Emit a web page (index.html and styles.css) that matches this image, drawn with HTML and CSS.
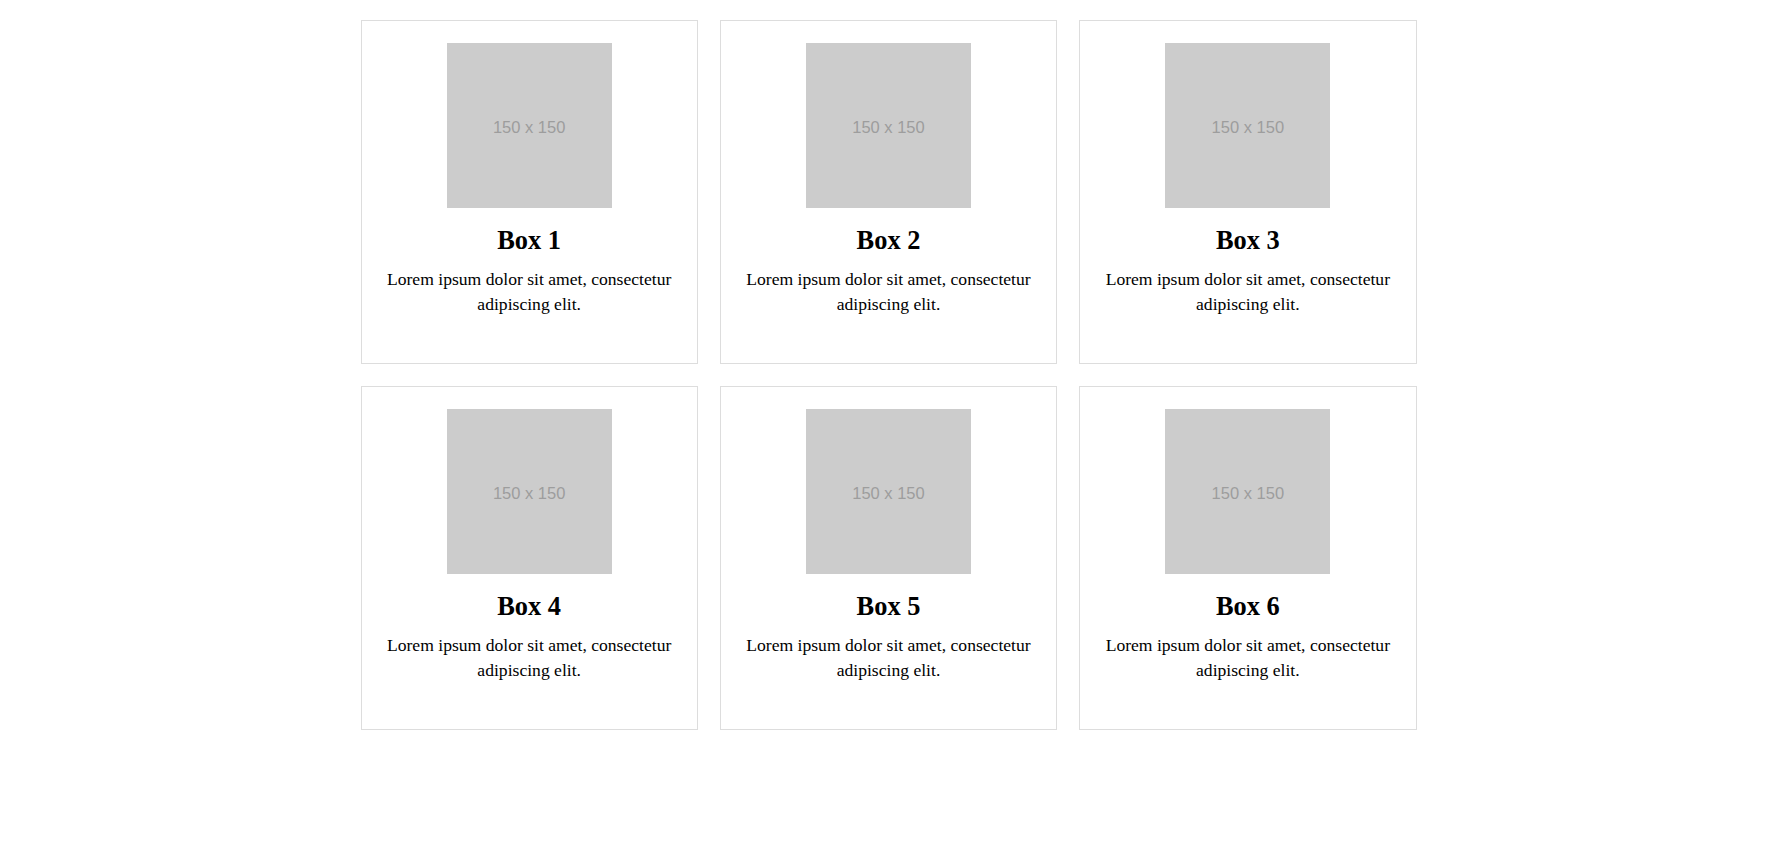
FILE: index.html
```html
<!DOCTYPE html>
<html>
<head>
<meta charset="utf-8">
<link rel="stylesheet" href="styles.css">
</head>
<body>
<div class="container">
  <div class="box"><div class="ph">150 x 150</div><h2>Box 1</h2><p>Lorem ipsum dolor sit amet, consectetur adipiscing elit.</p></div>
  <div class="box"><div class="ph">150 x 150</div><h2>Box 2</h2><p>Lorem ipsum dolor sit amet, consectetur adipiscing elit.</p></div>
  <div class="box"><div class="ph">150 x 150</div><h2>Box 3</h2><p>Lorem ipsum dolor sit amet, consectetur adipiscing elit.</p></div>
  <div class="box"><div class="ph">150 x 150</div><h2>Box 4</h2><p>Lorem ipsum dolor sit amet, consectetur adipiscing elit.</p></div>
  <div class="box"><div class="ph">150 x 150</div><h2>Box 5</h2><p>Lorem ipsum dolor sit amet, consectetur adipiscing elit.</p></div>
  <div class="box"><div class="ph">150 x 150</div><h2>Box 6</h2><p>Lorem ipsum dolor sit amet, consectetur adipiscing elit.</p></div>
</div>
</body>
</html>
```
FILE: styles.css
```css
html, body {
  margin: 0;
  padding: 0;
  background: #fff;
}
body {
  font-family: "Liberation Serif", "Times New Roman", serif;
  color: #000;
}
.container {
  width: 1056px;
  margin: 0 auto;
  padding-top: 20px;
  display: grid;
  grid-template-columns: repeat(3, 1fr);
  gap: 22px;
}
.box {
  border: 1px solid #ddd;
  padding: 22px 22px 22px;
  height: 344px;
  box-sizing: border-box;
  text-align: center;
}
.ph {
  width: 165px;
  height: 165px;
  box-sizing: border-box;
  padding-top: 4px;
  margin: 0 auto;
  background: #cccccc;
  color: #9d9d9d;
  font-family: "Liberation Sans", Arial, sans-serif;
  font-size: 16.5px;
  display: flex;
  align-items: center;
  justify-content: center;
}
.box h2 {
  font-size: 26.4px;
  line-height: 30px;
  font-weight: bold;
  margin: 17px 0 0;
}
.box p {
  font-size: 17.6px;
  line-height: 25px;
  margin: 11.5px 0 0;
}
```
